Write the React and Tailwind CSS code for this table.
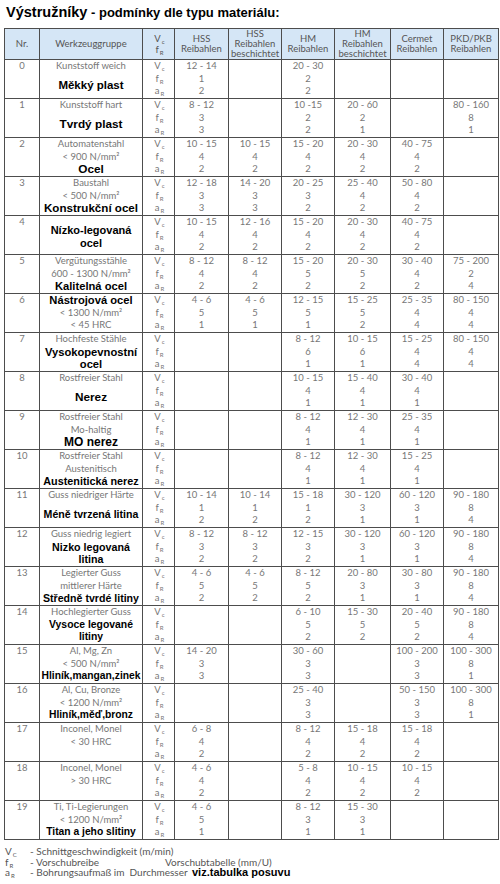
import React from "react";

const rows = [
  { nr: "0", mode: "split", g: [["Kunststoff weich"], ["Měkký plast", 11.5]], v: [["12 - 14", "1", "2"], null, ["20 - 30", "2", "2"], null, null, null] },
  { nr: "1", mode: "split", g: [["Kunststoff hart"], ["Tvrdý plast", 11.8]], v: [["8 - 12", "3", "3"], null, ["10 -15", "2", "2"], ["20 - 60", "2", "1"], null, ["80 - 160", "8", "1"]] },
  { nr: "2", mode: "stack", g: [["Automatenstahl"], ["< 900 N/mm²"], ["Ocel", 11.8]], v: [["10 - 15", "4", "2"], ["10 - 15", "4", "2"], ["15 - 20", "4", "2"], ["20 - 30", "4", "2"], ["40 - 75", "4", "2"], null] },
  { nr: "3", mode: "stack", g: [["Baustahl"], ["< 500 N/mm²"], ["Konstrukční ocel", 11.6]], v: [["12 - 18", "3", "3"], ["14 - 20", "3", "3"], ["20 - 25", "3", "2"], ["25 - 40", "4", "2"], ["50 - 80", "4", "2"], null] },
  { nr: "4", mode: "center", g: [["Nízko-legovaná", 11], ["ocel", 11]], v: [["10 - 15", "4", "2"], ["12 - 16", "4", "2"], ["15 - 20", "4", "2"], ["20 - 30", "4", "2"], ["40 - 75", "4", "2"], null] },
  { nr: "5", mode: "stack", g: [["Vergütungsstähle"], ["600 - 1300 N/mm²"], ["Kalitelná ocel", 11.2]], v: [["8 - 12", "4", "2"], ["8 - 12", "4", "2"], ["15 - 20", "5", "2"], ["20 - 30", "5", "2"], ["30 - 40", "4", "2"], ["75 - 200", "2", "4"]] },
  { nr: "6", mode: "stack", g: [["Nástrojová ocel", 11.2], ["< 1300 N/mm²"], ["< 45 HRC"]], v: [["4 - 6", "5", "1"], ["4 - 6", "5", "1"], ["12 - 15", "5", "1"], ["15 - 25", "5", "2"], ["25 - 35", "4", "4"], ["80 - 150", "4", "4"]] },
  { nr: "7", mode: "stack", g: [["Hochfeste Stähle"], ["Vysokopevnostní", 11.2], ["ocel", 11.2]], v: [null, null, ["8 - 12", "6", "1"], ["10 - 15", "6", "1"], ["15 - 25", "4", "4"], ["80 - 150", "4", "4"]] },
  { nr: "8", mode: "split", g: [["Rostfreier Stahl"], ["Nerez", 11.8]], v: [null, null, ["10 - 15", "4", "1"], ["15 - 40", "4", "1"], ["30 - 40", "4", "1"], null] },
  { nr: "9", mode: "stack", g: [["Rostfreier Stahl"], ["Mo-haltig"], ["MO nerez", 12]], v: [null, null, ["8 - 12", "4", "1"], ["12 - 30", "4", "1"], ["25 - 35", "4", "1"], null] },
  { nr: "10", mode: "stack", g: [["Rostfreier Stahl"], ["Austenitisch"], ["Austenitická nerez", 10.8]], v: [null, null, ["8 - 12", "4", "1"], ["12 - 30", "4", "1"], ["15 - 25", "4", "1"], null] },
  { nr: "11", mode: "split", g: [["Guss niedriger Härte"], ["Méně tvrzená litina", 10.6]], v: [["10 - 14", "1", "2"], ["10 - 14", "1", "2"], ["15 - 18", "1", "2"], ["30 - 120", "3", "1"], ["60 - 120", "3", "1"], ["90 - 180", "8", "4"]] },
  { nr: "12", mode: "stack", g: [["Guss niedrig legiert"], ["Nizko legovaná", 10.7], ["litina", 10.7]], v: [["8 - 12", "3", "2"], ["8 - 12", "3", "2"], ["12 - 15", "3", "2"], ["30 - 120", "3", "1"], ["60 - 120", "3", "1"], ["90 - 180", "8", "4"]] },
  { nr: "13", mode: "stack", g: [["Legierter Guss"], ["mittlerer Härte"], ["Středně tvrdé litiny", 10.6]], v: [["4 - 6", "5", "2"], ["4 - 6", "5", "2"], ["8 - 12", "5", "2"], ["20 - 80", "3", "1"], ["30 - 80", "3", "1"], ["90 - 180", "8", "4"]] },
  { nr: "14", mode: "stack", g: [["Hochlegierter Guss"], ["Vysoce legované", 10.4], ["litiny", 10.4]], v: [null, null, ["6 - 10", "5", "2"], ["15 - 30", "5", "2"], ["20 - 40", "5", "2"], ["90 - 180", "8", "4"]] },
  { nr: "15", mode: "stack", g: [["Al, Mg, Zn"], ["< 500 N/mm²"], ["Hliník,mangan,zinek", 10.3]], v: [["14 - 20", "3", "3"], null, ["30 - 60", "3", "3"], null, ["100 - 200", "3", "3"], ["100 - 300", "8", "1"]] },
  { nr: "16", mode: "stack", g: [["Al, Cu, Bronze"], ["< 1200 N/mm²"], ["Hliník,měď,bronz", 10.3]], v: [null, null, ["25 - 40", "3", "3"], null, ["50 - 150", "3", "3"], ["100 - 300", "8", "1"]] },
  { nr: "17", mode: "stack", g: [["Inconel, Monel"], ["< 30 HRC"]], v: [["6 - 8", "4", "2"], null, ["8 - 12", "4", "2"], ["15 - 18", "4", "2"], ["15 - 18", "4", "2"], null] },
  { nr: "18", mode: "stack", g: [["Inconel, Monel"], ["> 30 HRC"]], v: [["4 - 6", "4", "2"], null, ["5 - 8", "4", "2"], ["10 - 15", "4", "2"], ["10 - 15", "4", "2"], null] },
  { nr: "19", mode: "stack", g: [["Ti, Ti-Legierungen"], ["< 1200 N/mm²"], ["Titan a jeho slitiny", 10.3]], v: [["4 - 6", "5", "1"], null, ["8 - 12", "3", "1"], ["15 - 30", "3", "1"], null, null] },
];

const lightFont = { fontFamily: "Lato, 'Open Sans', sans-serif" };
const boldFont = { fontFamily: "'Liberation Sans', Arial, sans-serif" };

function Sym({ base, sub }) {
  return (
    <span className="inline-flex items-baseline">
      <span>{base}</span>
      <span className="text-[6px] leading-none relative top-[2px] ml-[1px]">{sub}</span>
    </span>
  );
}

function GroupLine({ line }) {
  const [t, size] = line;
  if (size) {
    return (
      <div
        className="font-bold text-black leading-[12.6px] whitespace-nowrap"
        style={{ ...boldFont, fontSize: size + "px" }}
      >
        {t}
      </div>
    );
  }
  return <div className="text-[9.5px] leading-[12.6px] whitespace-nowrap text-[#777]">{t}</div>;
}

function GroupCell({ row }) {
  if (row.mode === "split") {
    return (
      <div className="flex flex-col h-[38px] items-center">
        <GroupLine line={row.g[0]} />
        <div className="flex-1 flex flex-col items-center justify-center">
          {row.g.slice(1).map((l, i) => (
            <GroupLine key={i} line={l} />
          ))}
        </div>
      </div>
    );
  }
  if (row.mode === "center") {
    return (
      <div className="flex flex-col h-[38px] items-center justify-center pt-[3px]">
        {row.g.map((l, i) => (
          <GroupLine key={i} line={l} />
        ))}
      </div>
    );
  }
  return (
    <div className="flex flex-col h-[38px] items-center">
      {row.g.map((l, i) => (
        <GroupLine key={i} line={l} />
      ))}
    </div>
  );
}

const colW = [35, 103, 32, 54, 53, 53, 56, 53, 55];

const cellB = "border border-[#4d4d4d] p-0 align-top";
const thB = "border border-[#4d4d4d] font-normal p-0";

export default function App() {
  return (
    <div className="w-[500px] h-[884px] bg-white overflow-hidden" style={lightFont}>
      <div className="pl-[6px] pt-[3px] h-[28px] font-bold text-black leading-[18px] whitespace-nowrap" style={boldFont}>
        <span className="text-[14.5px]">Výstružníky</span>
        <span className="text-[13px]"> - podmínky dle typu materiálu:</span>
      </div>
      <table className="table-fixed border-collapse w-[494px] ml-[4px] border border-[#4d4d4d]">
        <colgroup>
          {colW.map((w, i) => (
            <col key={i} style={{ width: w + "px" }} />
          ))}
        </colgroup>
        <thead>
          <tr className="h-[31px] bg-[#d5e6f6] text-[#555] text-[9.5px] leading-[10px]">
            <th className={thB}>Nr.</th>
            <th className={thB}>Werkzeuggruppe</th>
            <th className={thB}>
              <div className="flex flex-col items-center leading-[11px] pl-[2px]">
                <Sym base="V" sub="c" />
                <Sym base="f" sub="R" />
              </div>
            </th>
            <th className={thB}>HSS<br />Reibahlen</th>
            <th className={thB}>HSS<br />Reibahlen<br />beschichtet</th>
            <th className={thB}>HM<br />Reibahlen</th>
            <th className={thB}>HM<br />Reibahlen<br />beschichtet</th>
            <th className={thB}>Cermet<br />Reibahlen</th>
            <th className={thB}>PKD/PKB<br />Reibahlen</th>
          </tr>
        </thead>
        <tbody className="text-[9.5px] text-[#777]">
          {rows.map((r) => (
            <tr key={r.nr} className="h-[39px]">
              <td className={cellB + " text-center leading-[12.6px]"}>{r.nr}</td>
              <td className={cellB + " text-center"}>
                <GroupCell row={r} />
              </td>
              <td className={cellB}>
                <div className="flex flex-col items-center leading-[12.6px] pl-[2px]">
                  <Sym base="V" sub="c" />
                  <Sym base="f" sub="R" />
                  <Sym base="a" sub="R" />
                </div>
              </td>
              {r.v.map((c, i) => (
                <td key={i} className={cellB + " text-center leading-[12.6px]"}>
                  {c ? (
                    <div className="flex flex-col">
                      <span>{c[0]}</span>
                      <span>{c[1]}</span>
                      <span>{c[2]}</span>
                    </div>
                  ) : null}
                </td>
              ))}
            </tr>
          ))}
        </tbody>
      </table>
      <div className="pl-[5px] pt-[6px] text-[10px] leading-[10.5px] text-[#555]">
        <div className="flex">
          <span className="w-[25px]"><Sym base="V" sub="C" /></span>
          <span>- Schnittgeschwindigkeit (m/min)</span>
        </div>
        <div className="flex">
          <span className="w-[25px]"><Sym base="f" sub="R" /></span>
          <span className="w-[135px]">- Vorschubreibe</span>
          <span>Vorschubtabelle (mm/U)</span>
        </div>
        <div className="flex">
          <span className="w-[25px]"><Sym base="a" sub="R" /></span>
          <span className="w-[162px]">- Bohrungsaufmaß im&nbsp; Durchmesser</span>
          <span className="font-bold text-black text-[11px]" style={boldFont}>
            viz.tabulka posuvu
          </span>
        </div>
      </div>
    </div>
  );
}
